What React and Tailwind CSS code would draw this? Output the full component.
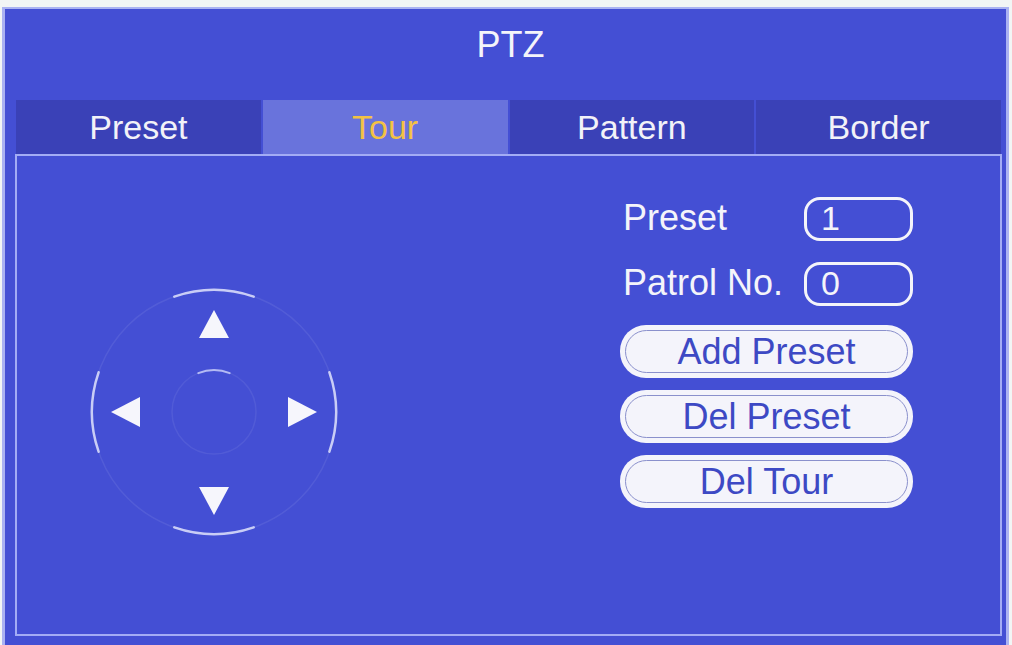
import React, { useState } from 'react';

const TABS = ['Preset', 'Tour', 'Pattern', 'Border'];

export default function App() {
  const [tab, setTab] = useState('Tour');
  const [preset, setPreset] = useState('1');
  const [patrol, setPatrol] = useState('0');

  return (
    <div
      className="w-[1012px] h-[645px] overflow-hidden bg-[#f2f5f5] pt-[7px] pl-[2px]"
      style={{ fontFamily: '"Liberation Sans", Arial, sans-serif' }}
    >
      <div className="w-[1007px] h-[640px] bg-[#444fd4] border-x-[3px] border-t-[2px] border-[#aab2f2] pl-[10px]">
        <div className="h-[91px] pt-[16px] text-center text-[36px] leading-[40px] text-[#f4f4fa]">PTZ</div>

        {/* tab strip */}
        <div className="w-[987px] px-px grid grid-cols-4 gap-[2px] h-[54px]">
          {TABS.map((t) => (
            <button
              key={t}
              onClick={() => setTab(t)}
              className={`text-[34px] leading-none ${
                tab === t ? 'bg-[#6973dc] text-[#f3c243]' : 'bg-[#3a41b7] text-[#f2f2f8]'
              }`}
            >
              {t}
            </button>
          ))}
        </div>

        <div className="w-[987px] h-[482px] border-2 border-[#a3acf5] flex">
          <Joystick />

          <div className="ml-[278px] pt-[41px] w-[293px] flex flex-col">
            <Field label="Preset" value={preset} onChange={setPreset} />
            <div className="h-[21px]" />
            <Field label="Patrol No." value={patrol} onChange={setPatrol} />
            <div className="h-[19px]" />
            <div className="flex flex-col gap-[12px]">
              <PillBtn>Add Preset</PillBtn>
              <PillBtn>Del Preset</PillBtn>
              <PillBtn>Del Tour</PillBtn>
            </div>
          </div>
        </div>
      </div>
    </div>
  );
}

function Field({ label, value, onChange }) {
  return (
    <div className="flex items-center h-[44px]">
      <span className="w-[184px] pl-[3px] text-[36px] leading-none text-[#f4f4fa] -mt-[2px]">{label}</span>
      <input
        value={value}
        onChange={(e) => onChange(e.target.value)}
        className="w-[109px] h-[44px] rounded-[16px] border-[3px] border-[#f4f4fa] bg-transparent pl-[14px] pb-[2px] text-[34px] leading-none text-[#f4f4fa] outline-none"
      />
    </div>
  );
}

function PillBtn({ children }) {
  return (
    <button className="h-[53px] w-[293px] rounded-[26px] bg-[#f4f4fb] p-[5px]">
      <div className="h-full rounded-[22px] border-[1.5px] border-[#8a90cc] flex items-center justify-center text-[36px] leading-none text-[#3d49c4]">
        {children}
      </div>
    </button>
  );
}

function Joystick() {
  const arc = '#c9cdf6';
  return (
    <svg width="256" height="256" viewBox="0 0 256 256" className="ml-[69px] mt-[128px] shrink-0">
      <circle cx="128" cy="128" r="122" fill="none" stroke="rgba(255,255,255,0.08)" strokeWidth="1.5" />
      <circle cx="128" cy="128" r="42" fill="none" stroke="rgba(255,255,255,0.07)" strokeWidth="1.5" />
      <g fill="none" stroke={arc} strokeWidth="2.5" strokeLinecap="round">
        <path d="M88.3 12.6 A122 122 0 0 1 167.7 12.6" />
        <path d="M88.3 243.4 A122 122 0 0 0 167.7 243.4" />
        <path d="M12.6 88.3 A122 122 0 0 0 12.6 167.7" />
        <path d="M243.4 88.3 A122 122 0 0 1 243.4 167.7" />
        <path d="M112.3 89.1 A42 42 0 0 1 143.7 89.1" strokeWidth="2" stroke="#b4baf3" />
      </g>
      <g fill="#f6f6fc">
        <polygon points="128,26 113,54 143,54" />
        <polygon points="113,203 143,203 128,231" />
        <polygon points="25,128 54,113 54,143" />
        <polygon points="231,128 202,113 202,143" />
      </g>
    </svg>
  );
}
